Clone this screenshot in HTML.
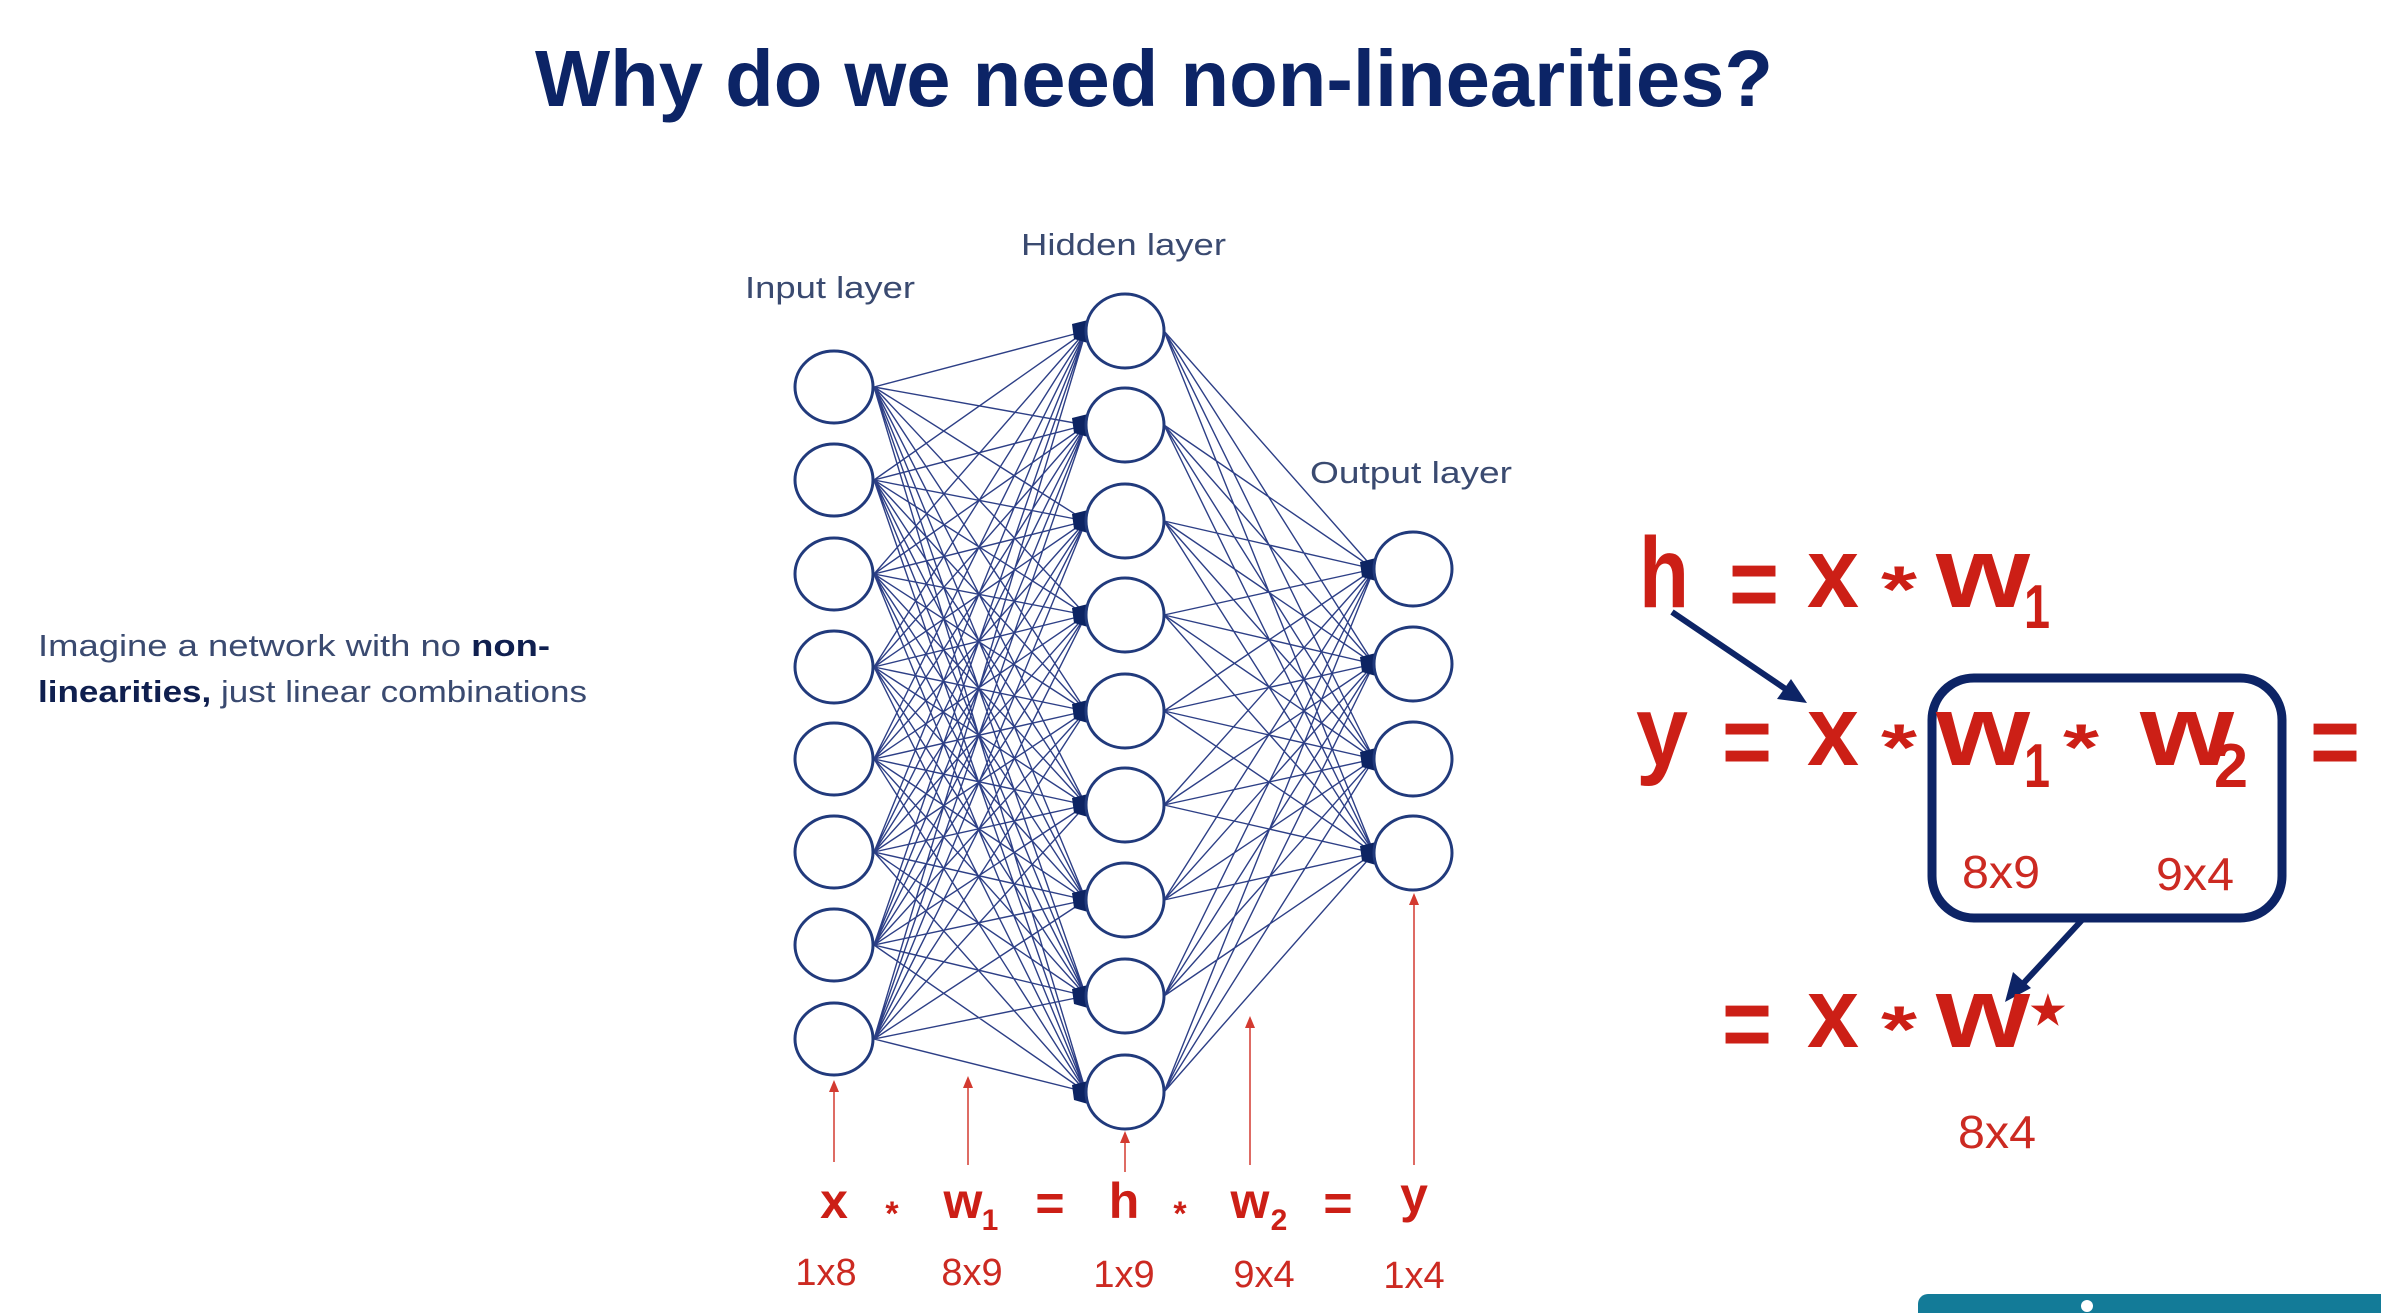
<!DOCTYPE html>
<html><head><meta charset="utf-8"><style>
html,body{margin:0;padding:0;background:#fff;width:2381px;height:1313px;overflow:hidden}
svg{display:block}
</style></head><body>
<svg width="2381" height="1313" viewBox="0 0 2381 1313" xmlns="http://www.w3.org/2000/svg" font-family="Liberation Sans, Arial, sans-serif">
<text x="535" y="106" font-size="80" font-weight="bold" fill="#0c2466" textLength="1238" lengthAdjust="spacingAndGlyphs">Why do we need non-linearities?</text>

<text x="38" y="656" font-size="31" fill="#3a4a70" textLength="512" lengthAdjust="spacingAndGlyphs">Imagine a network with no <tspan font-weight="bold" fill="#0f1f4f">non-</tspan></text>
<text x="38" y="702" font-size="31" fill="#3a4a70" textLength="549" lengthAdjust="spacingAndGlyphs"><tspan font-weight="bold" fill="#0f1f4f">linearities,</tspan> just linear combinations</text>

<text x="745" y="298" font-size="31" fill="#3a4a70" textLength="170" lengthAdjust="spacingAndGlyphs">Input layer</text>
<text x="1021" y="255" font-size="31" fill="#3a4a70" textLength="205" lengthAdjust="spacingAndGlyphs">Hidden layer</text>
<text x="1310" y="483" font-size="31" fill="#3a4a70" textLength="202" lengthAdjust="spacingAndGlyphs">Output layer</text>

<g stroke="#2d3f86" stroke-width="1.4" fill="none">
<path d="M874 387L1086 331M874 387L1086 425M874 387L1086 521M874 387L1086 615M874 387L1086 711M874 387L1086 805M874 387L1086 900M874 387L1086 996M874 387L1086 1092
M874 480L1086 331M874 480L1086 425M874 480L1086 521M874 480L1086 615M874 480L1086 711M874 480L1086 805M874 480L1086 900M874 480L1086 996M874 480L1086 1092
M874 574L1086 331M874 574L1086 425M874 574L1086 521M874 574L1086 615M874 574L1086 711M874 574L1086 805M874 574L1086 900M874 574L1086 996M874 574L1086 1092
M874 667L1086 331M874 667L1086 425M874 667L1086 521M874 667L1086 615M874 667L1086 711M874 667L1086 805M874 667L1086 900M874 667L1086 996M874 667L1086 1092
M874 759L1086 331M874 759L1086 425M874 759L1086 521M874 759L1086 615M874 759L1086 711M874 759L1086 805M874 759L1086 900M874 759L1086 996M874 759L1086 1092
M874 852L1086 331M874 852L1086 425M874 852L1086 521M874 852L1086 615M874 852L1086 711M874 852L1086 805M874 852L1086 900M874 852L1086 996M874 852L1086 1092
M874 945L1086 331M874 945L1086 425M874 945L1086 521M874 945L1086 615M874 945L1086 711M874 945L1086 805M874 945L1086 900M874 945L1086 996M874 945L1086 1092
M874 1039L1086 331M874 1039L1086 425M874 1039L1086 521M874 1039L1086 615M874 1039L1086 711M874 1039L1086 805M874 1039L1086 900M874 1039L1086 996M874 1039L1086 1092"/>
<path d="M1164 331L1374 569M1164 331L1374 664M1164 331L1374 759M1164 331L1374 853
M1164 425L1374 569M1164 425L1374 664M1164 425L1374 759M1164 425L1374 853
M1164 521L1374 569M1164 521L1374 664M1164 521L1374 759M1164 521L1374 853
M1164 615L1374 569M1164 615L1374 664M1164 615L1374 759M1164 615L1374 853
M1164 711L1374 569M1164 711L1374 664M1164 711L1374 759M1164 711L1374 853
M1164 805L1374 569M1164 805L1374 664M1164 805L1374 759M1164 805L1374 853
M1164 900L1374 569M1164 900L1374 664M1164 900L1374 759M1164 900L1374 853
M1164 996L1374 569M1164 996L1374 664M1164 996L1374 759M1164 996L1374 853
M1164 1092L1374 569M1164 1092L1374 664M1164 1092L1374 759M1164 1092L1374 853"/>
</g>
<g fill="#0d2463">
<path d="M1072 324l16-4 4 11-4 12-14-4z"/><path d="M1072 418l16-4 4 11-4 12-14-4z"/><path d="M1072 514l16-4 4 11-4 12-14-4z"/><path d="M1072 608l16-4 4 11-4 12-14-4z"/><path d="M1072 704l16-4 4 11-4 12-14-4z"/><path d="M1072 798l16-4 4 11-4 12-14-4z"/><path d="M1072 893l16-4 4 11-4 12-14-4z"/><path d="M1072 989l16-4 4 11-4 12-14-4z"/><path d="M1072 1085l16-4 4 11-4 12-14-4z"/>
<path d="M1360 562l16-4 4 11-4 12-14-4z"/><path d="M1360 657l16-4 4 11-4 12-14-4z"/><path d="M1360 752l16-4 4 11-4 12-14-4z"/><path d="M1360 846l16-4 4 11-4 12-14-4z"/>
</g>
<g fill="#fff" stroke="#213a7c" stroke-width="3">
<ellipse cx="834" cy="387" rx="39" ry="36"/><ellipse cx="834" cy="480" rx="39" ry="36"/><ellipse cx="834" cy="574" rx="39" ry="36"/><ellipse cx="834" cy="667" rx="39" ry="36"/><ellipse cx="834" cy="759" rx="39" ry="36"/><ellipse cx="834" cy="852" rx="39" ry="36"/><ellipse cx="834" cy="945" rx="39" ry="36"/><ellipse cx="834" cy="1039" rx="39" ry="36"/>
<ellipse cx="1125" cy="331" rx="39" ry="37"/><ellipse cx="1125" cy="425" rx="39" ry="37"/><ellipse cx="1125" cy="521" rx="39" ry="37"/><ellipse cx="1125" cy="615" rx="39" ry="37"/><ellipse cx="1125" cy="711" rx="39" ry="37"/><ellipse cx="1125" cy="805" rx="39" ry="37"/><ellipse cx="1125" cy="900" rx="39" ry="37"/><ellipse cx="1125" cy="996" rx="39" ry="37"/><ellipse cx="1125" cy="1092" rx="39" ry="37"/>
<ellipse cx="1413" cy="569" rx="39" ry="37"/><ellipse cx="1413" cy="664" rx="39" ry="37"/><ellipse cx="1413" cy="759" rx="39" ry="37"/><ellipse cx="1413" cy="853" rx="39" ry="37"/>
</g>

<g stroke="#d33a30" stroke-width="1.5">
<line x1="834" y1="1092" x2="834" y2="1162"/><line x1="968" y1="1088" x2="968" y2="1165"/><line x1="1125" y1="1143" x2="1125" y2="1172"/><line x1="1250" y1="1028" x2="1250" y2="1165"/><line x1="1414" y1="905" x2="1414" y2="1165"/>
</g>
<g fill="#d33a30">
<path d="M834 1080l-5 12h10z"/><path d="M968 1076l-5 12h10z"/><path d="M1125 1131l-5 12h10z"/><path d="M1250 1016l-5 12h10z"/><path d="M1414 893l-5 12h10z"/>
</g>

<g fill="#cc1f16" font-weight="bold" font-size="50">
<text x="834" y="1218" text-anchor="middle">x</text>
<text x="892" y="1225" text-anchor="middle" font-size="34">*</text>
<text x="963" y="1218" text-anchor="middle">w</text><text x="990" y="1230" text-anchor="middle" font-size="30">1</text>
<text x="1050" y="1220" text-anchor="middle">=</text>
<text x="1124" y="1218" text-anchor="middle">h</text>
<text x="1180" y="1225" text-anchor="middle" font-size="34">*</text>
<text x="1250" y="1218" text-anchor="middle">w</text><text x="1279" y="1230" text-anchor="middle" font-size="30">2</text>
<text x="1338" y="1220" text-anchor="middle">=</text>
<text x="1414" y="1212" text-anchor="middle">y</text>
</g>
<g fill="#cc2a22" font-size="38" text-anchor="middle">
<text x="826" y="1285">1x8</text><text x="972" y="1285">8x9</text><text x="1124" y="1287">1x9</text><text x="1264" y="1287">9x4</text><text x="1414" y="1288">1x4</text>
</g>

<rect x="1932" y="678" width="350" height="240" rx="42" fill="none" stroke="#0d2466" stroke-width="9"/>
<g stroke="#0d2466" stroke-width="6" fill="#0d2466">
<line x1="1672" y1="612" x2="1790" y2="692"/><path d="M1807 703l-30-4 14-20z" stroke="none"/>
<line x1="2082" y1="920" x2="2020" y2="987"/><path d="M2005 1002l8-30 18 16z" stroke="none"/>
</g>

<g fill="#cc1f16" font-weight="bold" font-size="100">
<text x="1639" y="607" textLength="50" lengthAdjust="spacingAndGlyphs">h</text>
<text x="1729" y="618" textLength="50" lengthAdjust="spacingAndGlyphs">=</text>
<text x="1807" y="607" textLength="52" lengthAdjust="spacingAndGlyphs">x</text>
<text x="1881" y="612" font-size="66" textLength="36" lengthAdjust="spacingAndGlyphs">*</text>
<text x="1936" y="607" textLength="94" lengthAdjust="spacingAndGlyphs">w</text>
<text x="2024" y="628" font-size="62" textLength="26" lengthAdjust="spacingAndGlyphs">1</text>

<text x="1636" y="765" textLength="52" lengthAdjust="spacingAndGlyphs">y</text>
<text x="1722" y="776" textLength="50" lengthAdjust="spacingAndGlyphs">=</text>
<text x="1807" y="765" textLength="52" lengthAdjust="spacingAndGlyphs">x</text>
<text x="1881" y="770" font-size="66" textLength="36" lengthAdjust="spacingAndGlyphs">*</text>
<text x="1936" y="765" textLength="94" lengthAdjust="spacingAndGlyphs">w</text>
<text x="2024" y="787" font-size="62" textLength="26" lengthAdjust="spacingAndGlyphs">1</text>
<text x="2063" y="770" font-size="66" textLength="36" lengthAdjust="spacingAndGlyphs">*</text>
<text x="2140" y="765" textLength="94" lengthAdjust="spacingAndGlyphs">w</text>
<text x="2214" y="787" font-size="62" textLength="34" lengthAdjust="spacingAndGlyphs">2</text>
<text x="2310" y="776" textLength="50" lengthAdjust="spacingAndGlyphs">=</text>

<text x="1722" y="1058" textLength="50" lengthAdjust="spacingAndGlyphs">=</text>
<text x="1807" y="1047" textLength="52" lengthAdjust="spacingAndGlyphs">x</text>
<text x="1881" y="1052" font-size="66" textLength="36" lengthAdjust="spacingAndGlyphs">*</text>
<text x="1936" y="1047" textLength="94" lengthAdjust="spacingAndGlyphs">w</text>
<text x="2030" y="1024" font-size="40">★</text>
</g>
<g fill="#cc2a22" font-size="46">
<text x="1962" y="888" textLength="78" lengthAdjust="spacingAndGlyphs">8x9</text>
<text x="2156" y="890" textLength="78" lengthAdjust="spacingAndGlyphs">9x4</text>
<text x="1958" y="1148" textLength="78" lengthAdjust="spacingAndGlyphs">8x4</text>
</g>

<rect x="1918" y="1294" width="480" height="40" rx="10" fill="#137b98"/>
<circle cx="2087" cy="1306" r="6" fill="#fff"/>
</svg>
</body></html>
